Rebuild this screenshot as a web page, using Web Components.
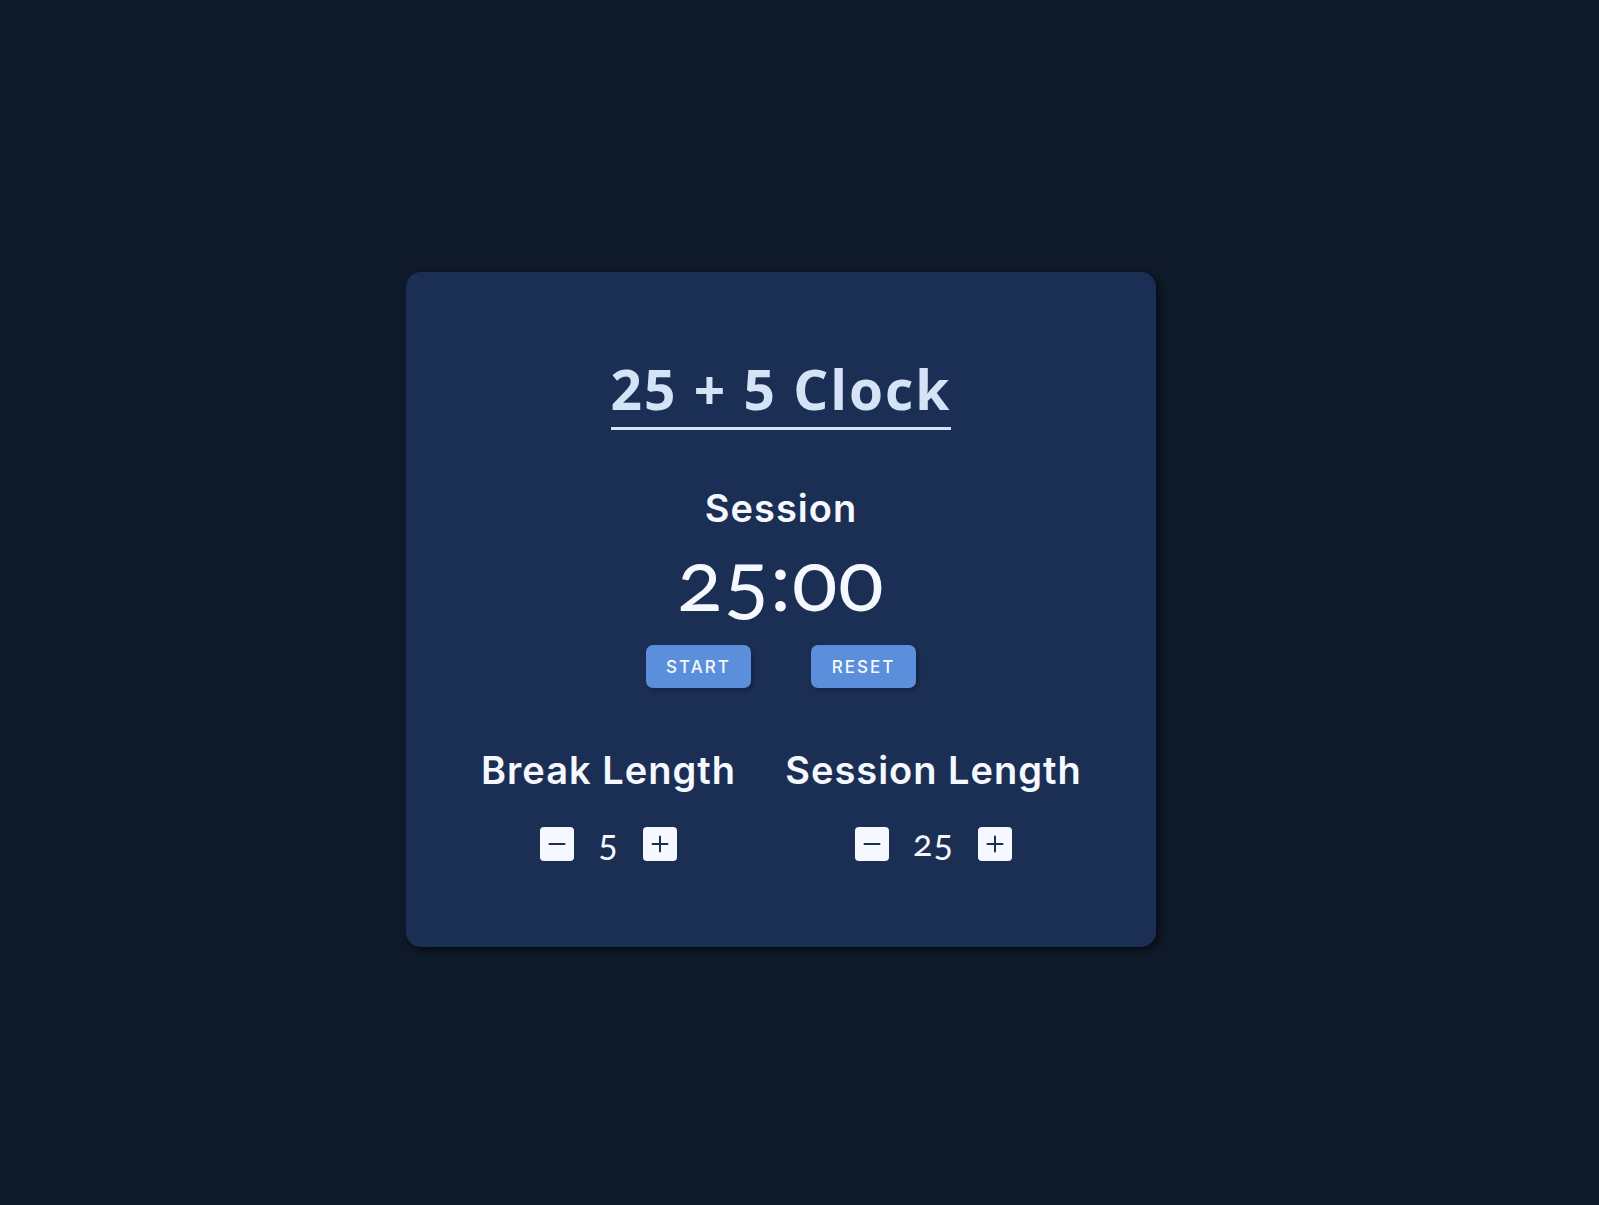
<!DOCTYPE html>
<html lang="en">
<head>
<meta charset="utf-8">
<meta name="viewport" content="width=device-width, initial-scale=1">
<title>25 + 5 Clock</title>
<style>
  * { box-sizing: border-box; }
  body {
    margin: 0;
    min-height: 100vh;
    padding: 14px 37px 0 0;
    display: grid;
    place-items: center;
    background: #0f1a2a;
    color: #f5f8ff;
    font-family: Lato, "Open Sans", sans-serif;
  }
</style>
</head>
<body>
<pomodoro-clock></pomodoro-clock>
<script>
class ClockButton extends HTMLElement {
  constructor() {
    super();
    this.attachShadow({ mode: 'open' }).innerHTML = `
      <style>
        :host { display: block; }
        button {
          display: block; border: 0; border-radius: 7px; padding: 1px 18px;
          height: 43px; min-width: 105px; cursor: pointer;
          background: #5b8fdb; color: #f5f8ff;
          font: 500 17px/20px Inter, sans-serif; letter-spacing: 2px;
          box-shadow: 2px 2px 5px rgba(0, 0, 0, .3);
        }
      </style>
      <button type="button"><slot></slot></button>`;
  }
}
customElements.define('clock-button', ClockButton);

class LengthControl extends HTMLElement {
  connectedCallback() {
    const label = this.getAttribute('label');
    this.attachShadow({ mode: 'open' }).innerHTML = `
      <style>
        :host { display: flex; flex-direction: column; align-items: center; gap: 34px; }
        h2 { margin: 0; font: 600 38px/46px Inter, sans-serif; letter-spacing: 1px; white-space: nowrap; }
        .row { display: flex; align-items: center; gap: 24px; height: 34px; }
        output { font-size: 36px; line-height: 34px; height: 38px; letter-spacing: 1px; font-variant-numeric: oldstyle-nums; }
        button {
          display: grid; place-items: center; width: 34px; height: 34px; padding: 0;
          border: 0; border-radius: 4px; background: #f5f8ff; color: #1b2f55; cursor: pointer;
        }
        svg { width: 18px; height: 18px; fill: none; stroke: currentColor; stroke-width: 2; stroke-linecap: round; }
      </style>
      <h2>${label}</h2>
      <div class="row">
        <button type="button" aria-label="Decrease ${label}"><svg viewBox="0 0 18 18"><path d="M1.5 9h15"/></svg></button>
        <output aria-label="${label}">${this.getAttribute('value')}</output>
        <button type="button" aria-label="Increase ${label}"><svg viewBox="0 0 18 18"><path d="M1.5 9h15M9 1.5v15"/></svg></button>
      </div>`;
  }
}
customElements.define('length-control', LengthControl);

class PomodoroClock extends HTMLElement {
  constructor() {
    super();
    this.attachShadow({ mode: 'open' }).innerHTML = `
      <style>
        :host {
          box-sizing: border-box; display: flex; flex-direction: column; align-items: center;
          width: 100%; max-width: 750px; padding: 84px 64px 86px;
          border-radius: 15px; background: #1b2f55;
          box-shadow: 3px 3px 10px rgba(0, 0, 0, .6);
        }
        h1 {
          margin: 0 0 55px; padding-bottom: 5px; border-bottom: 3px solid #d5e3f7; color: #d5e3f7;
          font: 700 55px/66px "Open Sans", sans-serif; letter-spacing: 2px;
        }
        h2 { margin: 0; font: 600 38px/46px Inter, sans-serif; letter-spacing: 1px; }
        .time { margin: 4px 0 22px; font-size: 84px; line-height: 88px; letter-spacing: 1px; font-variant-numeric: oldstyle-nums; }
        .actions { display: flex; gap: 60px; margin-bottom: 59px; }
        .lengths { display: grid; grid-template-columns: minmax(260px, auto) minmax(300px, auto); gap: 45px; }
      </style>
      <h1>25 + 5 Clock</h1>
      <h2>Session</h2>
      <div class="time" role="timer">25:00</div>
      <div class="actions">
        <clock-button>START</clock-button>
        <clock-button>RESET</clock-button>
      </div>
      <div class="lengths">
        <length-control label="Break Length" value="5"></length-control>
        <length-control label="Session Length" value="25"></length-control>
      </div>`;
  }
}
customElements.define('pomodoro-clock', PomodoroClock);
</script>
</body>
</html>
